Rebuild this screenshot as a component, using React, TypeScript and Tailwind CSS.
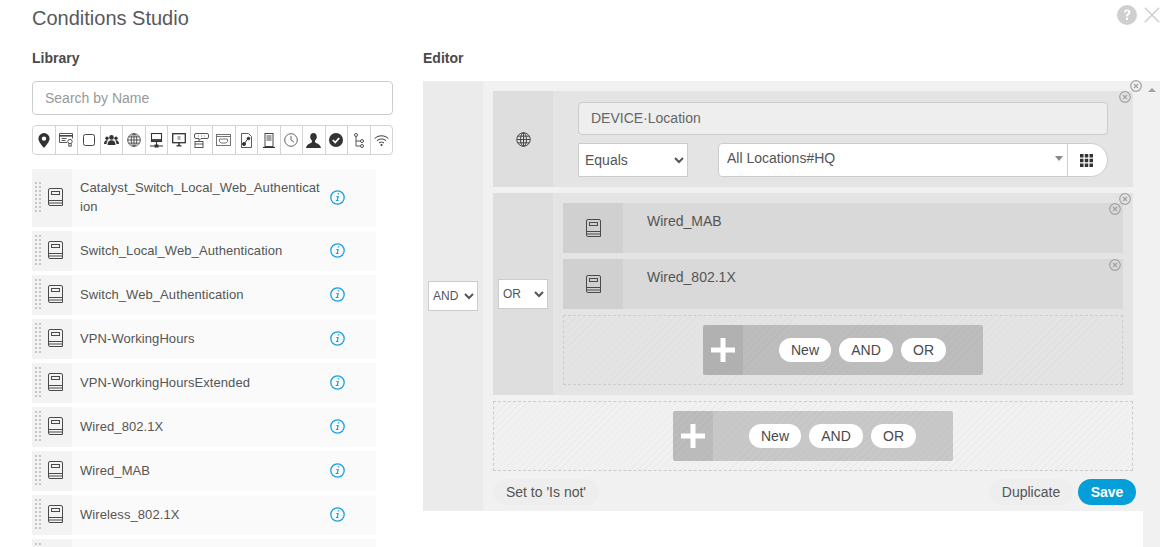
import type { ReactNode } from "react";

const libraryItems = [
  "Switch_Local_Web_Authentication",
  "Switch_Web_Authentication",
  "VPN-WorkingHours",
  "VPN-WorkingHoursExtended",
  "Wired_802.1X",
  "Wired_MAB",
  "Wireless_802.1X",
];

const hatch =
  "bg-[repeating-linear-gradient(135deg,transparent_0px,transparent_4px,rgba(0,0,0,0.02)_4px,rgba(0,0,0,0.02)_5px)]";

function BookIcon({ className = "" }: { className?: string }) {
  return (
    <svg width="15" height="18" viewBox="0 0 15 18" fill="none" stroke="#4a4a4a" className={className}>
      <path d="M2 .5h11a1.5 1.5 0 0 1 1.5 1.5v15.5H2A1.5 1.5 0 0 1 .5 16V2A1.5 1.5 0 0 1 2 .5z" />
      <rect x="3.5" y="3.5" width="8" height="3" />
      <path d="M.5 12.5h14M.5 15h14" />
    </svg>
  );
}

function InfoIcon() {
  return (
    <svg width="15" height="15" viewBox="0 0 15 15" fill="none" className="mt-[-2px]">
      <circle cx="7.5" cy="7.5" r="6.7" stroke="#1b9fdf" strokeWidth="1.3" />
      <path d="M7.900 3.200h1.500l-.3 1.400H7.600zM6 6.100h2.900l-1 4h.8l-.2.900H5.700l.2-.9h.8l.7-3.100h-.6z" fill="#1b9fdf" />
    </svg>
  );
}

function GripDots() {
  const rows = Array.from({ length: 8 });
  return (
    <div className="mt-[-2px] flex w-[6px] flex-col gap-[2px]">
      {rows.map((_, i) => (
        <div key={i} className="flex justify-between">
          <span className="h-[2px] w-[2px] bg-[#c6c6c6]" />
          <span className="h-[2px] w-[2px] bg-[#c6c6c6]" />
        </div>
      ))}
    </div>
  );
}

function GlobeIcon({ size = 15 }: { size?: number }) {
  return (
    <svg width={size} height={size} viewBox="0 0 14 14" fill="none" stroke="#444" strokeWidth="0.9">
      <circle cx="7" cy="7" r="6.3" />
      <ellipse cx="7" cy="7" rx="2.8" ry="6.3" />
      <path d="M7 .7v12.6M.7 7h12.600M1.600 3.900h10.800M1.600 10.100h10.800" />
    </svg>
  );
}

const toolbarIcons: ReactNode[] = [
  <svg key="pin" width="12" height="15" viewBox="0 0 12 15"><path fillRule="evenodd" d="M6 0a5.600 5.600 0 0 1 5.600 5.600C11.600 9 8 12.600 6 15 4 12.600.4 9 .4 5.600A5.600 5.600 0 0 1 6 0zm0 3.400a2.200 2.200 0 1 0 0 4.400 2.200 2.200 0 0 0 0-4.400z" fill="#333" /></svg>,
  <svg key="cert" width="15" height="14" viewBox="0 0 15 14" fill="none" stroke="#444" strokeWidth="0.9"><path d="M8 9.500H.5V.5h13v5" /><path d="M.5 2.800h13" strokeWidth="1.600" /><path d="M2.500 5.500h5M2.500 7.500h4" /><circle cx="11" cy="8.500" r="2.200" /><path d="M9.800 10.500v3l1.200-.8 1.200.8v-3" /></svg>,
  <svg key="square" width="12" height="12" viewBox="0 0 12 12" fill="none" stroke="#444"><rect x=".5" y=".5" width="11" height="11" rx="2" /></svg>,
  <svg key="group" width="15" height="10" viewBox="0 0 15 10" fill="#333"><circle cx="7.500" cy="2.400" r="2.300" /><path d="M3.500 10c0-3 1.500-4.800 4-4.800s4 1.800 4 4.800z" /><circle cx="3" cy="3.200" r="1.700" /><path d="M0 9c0-2.500 1-3.800 3-3.800.4 0 .6 0 .9.200C3 6.400 2.600 7.600 2.500 9z" /><circle cx="12" cy="3.200" r="1.700" /><path d="M15 9c0-2.500-1-3.800-3-3.800-.4 0-.6 0-.9.200.9 1 1.300 2.200 1.400 3.600z" /></svg>,
  <GlobeIcon key="globe" size={14} />,
  <svg key="desk" width="13" height="15" viewBox="0 0 13 15" fill="none" stroke="#333"><rect x="1.500" y=".5" width="10" height="8" strokeWidth="1.100" /><path d="M1 7h11" strokeWidth="1.800" /><path d="M6.500 9v4M0 13h13" /><rect x="5" y="12" width="3" height="2" fill="#333" /></svg>,
  <svg key="mon" width="14" height="14" viewBox="0 0 14 14" fill="none" stroke="#333"><rect x=".7" y=".7" width="12.600" height="9" strokeWidth="1.300" /><path d="M4.500 12.800h5" strokeWidth="1.300" /><path d="M7 10v3" strokeWidth="1.500" /><path d="M5.500 4h3M5.500 6h3" strokeWidth="0.800" /></svg>,
  <svg key="chat" width="15" height="15" viewBox="0 0 15 15" fill="none" stroke="#444" strokeWidth="0.9"><path d="M2 .5h11a1.500 1.500 0 0 1 1.500 1.500v2A1.500 1.500 0 0 1 13 5.500H7L5 7.500v-2H2A1.500 1.500 0 0 1 .5 4V2A1.500 1.500 0 0 1 2 .5z" /><rect x="1" y="8.500" width="8" height="6" /><path d="M1 11h8M4 3h.8M7 3h.8M10 3h.8" /></svg>,
  <svg key="port" width="15" height="12" viewBox="0 0 15 12" fill="none" stroke="#666" strokeWidth="0.9"><rect x=".5" y=".5" width="14" height="11" /><path d="M.5 2.500h14" /><path d="M3.500 5h8v2.500l-1.500 1.500H5L3.500 7.500z" /></svg>,
  <svg key="doc" width="11" height="15" viewBox="0 0 11 15" fill="none" stroke="#333"><path d="M.5.5h7L10.500 3.500V14.500H.5z" strokeWidth="0.800" /><path d="M3 11L7.500 5" strokeWidth="1" /><circle cx="3" cy="11" r="1.500" fill="#333" /><circle cx="7.500" cy="5.500" r="1.300" fill="#333" /></svg>,
  <svg key="server" width="12" height="15" viewBox="0 0 12 15" fill="none" stroke="#333" strokeWidth="0.900"><rect x="2" y=".5" width="8" height="13" /><path d="M3.500 3h5M3.500 5h5M3.500 7h5" /><path d="M0 14.500h12" strokeWidth="1.200" /></svg>,
  <svg key="clock" width="14" height="14" viewBox="0 0 14 14" fill="none" stroke="#555" strokeWidth="0.900"><circle cx="7" cy="7" r="6.300" /><path d="M7 2.800V7l3 2.200" /></svg>,
  <svg key="person" width="15" height="15" viewBox="0 0 15 15" fill="#333"><path d="M7.500 0c2 0 3.300 1.500 3.300 3.800 0 1.700-.7 3-1.700 3.800-.3.800-.1 1.600.6 2.100 1.500 1 4.600 1.500 5.300 5.300H0c.7-3.800 3.800-4.300 5.300-5.300.7-.5.9-1.300.6-2.100C4.900 6.800 4.200 5.500 4.200 3.800 4.200 1.500 5.500 0 7.500 0z" /></svg>,
  <svg key="check" width="14" height="14" viewBox="0 0 14 14"><circle cx="7" cy="7" r="7" fill="#333" /><path d="M3.800 7l2.400 2.500 4-4.500" fill="none" stroke="#fff" strokeWidth="1.800" /></svg>,
  <svg key="tree" width="10" height="15" viewBox="0 0 10 15" fill="none" stroke="#444" strokeWidth="0.900"><circle cx="2" cy="2" r="1.500" /><circle cx="8" cy="8" r="1.500" /><circle cx="8" cy="13" r="1.500" /><path d="M2 3.500V13h4.500M2 8h4.500" /></svg>,
  <svg key="wifi" width="15" height="11" viewBox="0 0 15 11" fill="none" stroke="#333"><path d="M.7 3.500c4-3.600 9.600-3.600 13.600 0M2.900 5.800c2.800-2.400 6.400-2.400 9.200 0M5 8c1.500-1.100 3.500-1.100 5 0" /><circle cx="7.500" cy="10" r="1" fill="#333" stroke="none" /></svg>,
];

function RemoveDot({ className }: { className: string }) {
  return (
    <svg width="12" height="12" viewBox="0 0 12 12" fill="none" stroke="#a3a3a3" className={`absolute ${className}`}>
      <circle cx="6" cy="6" r="5.300" strokeWidth="1.200" />
      <path d="M4 4l4 4M8 4l-4 4" strokeWidth="1.300" />
    </svg>
  );
}

function LibraryRow({ name, tall }: { name: string; tall?: boolean }) {
  return (
    <div className={`flex w-[344px] shrink-0 bg-[#fafafa] ${tall ? "h-[58px]" : "h-[40px]"}`}>
      <div className="flex w-[40px] items-center gap-[7px] bg-[#f3f3f3] pl-[3px]">
        <GripDots />
        <BookIcon className="mt-[-2px]" />
      </div>
      <div className="flex flex-1 items-center pl-[8px]">
        <div className="mt-[-2px] w-[250px] pr-[8px] text-[13px] leading-[19px] tracking-[0.08px] break-all text-[#555]">{name}</div>
        {name && <InfoIcon />}
      </div>
    </div>
  );
}

function AddPanel() {
  return (
    <div className={`flex h-[70px] items-center justify-center border border-dashed border-[#cdcdcd] ${hatch}`}>
      <div className="flex h-[50px] w-[280px] overflow-hidden rounded-[2px] bg-black/[0.17]">
        <div className="flex w-[40px] items-center justify-center bg-black/[0.06]">
          <svg width="24" height="24" viewBox="0 0 24 24" fill="#fff">
            <path d="M9.500 0h5v9.500H24v5h-9.500V24h-5v-9.500H0v-5h9.500z" />
          </svg>
        </div>
        <div className="flex flex-1 items-center gap-[8px] pl-[36px]">
          <button className="h-[24px] w-[52px] rounded-full bg-white text-[14px] text-[#4a4a4a]">New</button>
          <button className="h-[24px] w-[54px] rounded-full bg-white text-[14px] text-[#4a4a4a]">AND</button>
          <button className="h-[24px] w-[45px] rounded-full bg-white text-[14px] text-[#4a4a4a]">OR</button>
        </div>
      </div>
    </div>
  );
}

function ChildCondition({ name }: { name: string }) {
  return (
    <div className="flex h-[50px] bg-[#d9d9d9]">
      <div className="flex w-[60px] items-center justify-center bg-[#d0d0d0]">
        <BookIcon />
      </div>
      <div className="pt-[9px] pl-[24px] text-[14px] leading-[18px] text-[#555]">{name}</div>
    </div>
  );
}

export default function App() {
  return (
    <div className="relative h-[547px] w-[1171px] overflow-hidden bg-white font-['Liberation_Sans',sans-serif] text-[#555]">
      <header className="flex h-[37px] items-start justify-between pr-[11px] pl-[32px]">
        <h1 className="pt-[6px] text-[20px] leading-[24px] text-[#58585b]">Conditions Studio</h1>
        <div className="flex items-center gap-[7px] pt-[5px]">
          <svg width="20" height="20" viewBox="0 0 20 20">
            <circle cx="10" cy="10" r="10" fill="#cfcfcf" />
            <path d="M7 7.500C7 5.500 8.300 4.400 10.200 4.400c1.900 0 3.200 1.100 3.200 2.800 0 2.300-2.400 2.300-2.400 4.300H9c0-3 2.300-3 2.300-4.300 0-.7-.5-1.100-1.200-1.100-.8 0-1.200.5-1.300 1.400zM9 12.800h2v2.200H9z" fill="#fff" />
          </svg>
          <svg width="16" height="16" viewBox="0 0 16 16" stroke="#cfcfcf" strokeWidth="1.500">
            <path d="M.8.800l14.400 14.400M15.200.800L.8 15.200" />
          </svg>
        </div>
      </header>

      <div className="flex pl-[32px]">
        <section className="w-[361px]">
          <h2 className="pt-[12px] text-[14px] leading-[18px] font-bold text-[#4a4a4a]">Library</h2>
          <input
            placeholder="Search by Name"
            className="mt-[14px] h-[34px] w-full rounded-[4px] border border-[#ccc] px-[12px] text-[14px] outline-none placeholder:text-[#999]"
          />
          <div className="mt-[10px] flex h-[30px] rounded-[4px] border border-[#d4d4d4]">
            {toolbarIcons.map((icon, i) => (
              <div key={i} className="flex flex-1 items-center justify-center border-l border-[#d4d4d4] first:border-l-0">
                {icon}
              </div>
            ))}
          </div>
          <div className="mt-[14px] flex h-[378px] flex-col gap-[4px] overflow-hidden">
            <LibraryRow name="Catalyst_Switch_Local_Web_Authentication" tall />
            {libraryItems.map((name) => (
              <LibraryRow key={name} name={name} />
            ))}
            <LibraryRow name="" />
          </div>
        </section>

        <section className="ml-[30px] flex-1">
          <h2 className="pt-[12px] text-[14px] leading-[18px] font-bold text-[#4a4a4a]">Editor</h2>
          <div className="relative mt-[14px] flex h-[466px] w-[737px]">
            <div className="h-[430px] w-[720px]">
              <div className="relative flex h-[430px] bg-[#f1f1f1]">
                <div className="flex w-[60px] items-center justify-center bg-[#ebebeb]">
                  <select className="h-[30px] w-[50px] border border-[#ccc] bg-white text-[12px] text-[#555]">
                    <option>AND</option>
                  </select>
                </div>
                <div className="flex flex-1 flex-col gap-[6px] px-[10px] pt-[10px]">
                  <div className="relative flex h-[96px] bg-[#e4e4e4]">
                    <div className="flex w-[60px] items-center justify-center bg-[#dedede]">
                      <GlobeIcon />
                    </div>
                    <div className="flex-1 pt-[11px] pl-[25px]">
                      <div className="flex h-[33px] w-[530px] items-center rounded-[4px] border border-[#ccc] bg-[#eee] px-[12px] text-[14px] text-[#666]">
                        DEVICE·Location
                      </div>
                      <div className="mt-[8px] flex h-[34px] w-[530px] justify-between">
                        <select className="h-[34px] w-[110px] border border-[#ccc] bg-white px-[2px] text-[14px] text-[#555]">
                          <option>Equals</option>
                        </select>
                        <div className="flex h-[34px] w-[390px] rounded-[4px] rounded-r-[17px] border border-[#ccc] bg-white">
                          <div className="flex flex-1 items-center justify-between pr-[4px] pb-[3px] pl-[8px] text-[14px] text-[#555]">
                            All Locations#HQ
                            <svg width="8" height="5" viewBox="0 0 8 5" fill="#888"><path d="M0 0h8L4 5z" /></svg>
                          </div>
                          <div className="flex w-[40px] items-center justify-center border-l border-[#ccc] pr-[3px]">
                            <svg width="13" height="13" viewBox="0 0 13 13" fill="#333">
                              <path d="M0 0h3.500v3.500H0zM4.750 0h3.500v3.500h-3.500zM9.500 0H13v3.500H9.500zM0 4.750h3.500v3.500H0zM4.750 4.750h3.500v3.500h-3.500zM9.500 4.750H13v3.500H9.500zM0 9.500h3.500V13H0zM4.750 9.500h3.500V13h-3.500zM9.500 9.500H13V13H9.500z" />
                            </svg>
                          </div>
                        </div>
                      </div>
                    </div>
                    <RemoveDot className="top-[0px] right-[2px]" />
                  </div>

                  <div className="relative flex h-[202px] bg-[#e4e4e4]">
                    <div className="flex w-[60px] items-center justify-center bg-[#dedede]">
                      <select className="h-[30px] w-[50px] border border-[#ccc] bg-white text-[12px] text-[#555]">
                        <option>OR</option>
                      </select>
                    </div>
                    <div className="flex flex-1 flex-col gap-[6px] p-[10px]">
                      <ChildCondition name="Wired_MAB" />
                      <ChildCondition name="Wired_802.1X" />
                      <AddPanel />
                    </div>
                    <RemoveDot className="top-[10px] right-[12px]" />
                    <RemoveDot className="top-[66px] right-[12px]" />
                    <RemoveDot className="top-[0px] right-[2px]" />
                  </div>

                  <AddPanel />

                  <div className="mt-[2px] flex h-[26px] items-center justify-between text-[14px]">
                    <button className="h-[26px] w-[106px] rounded-full bg-[#eeeeee] text-[#555]">Set to 'Is not'</button>
                    <div className="mr-[-3px] flex gap-[5px]">
                      <button className="h-[26px] w-[84px] rounded-full bg-[#eeeeee] text-[#555]">Duplicate</button>
                      <button className="h-[26px] w-[58px] rounded-full bg-[#049fd9] font-bold text-white">Save</button>
                    </div>
                  </div>
                </div>
              </div>
            </div>
            <div className="flex w-[17px] justify-center bg-[#f1f1f1] pt-[7px]">
              <svg width="8" height="4" viewBox="0 0 8 4" fill="#a3a3a3"><path d="M4 0l4 4H0z" /></svg>
            </div>
            <RemoveDot className="top-[-1px] right-[18px]" />
          </div>
        </section>
      </div>
    </div>
  );
}
